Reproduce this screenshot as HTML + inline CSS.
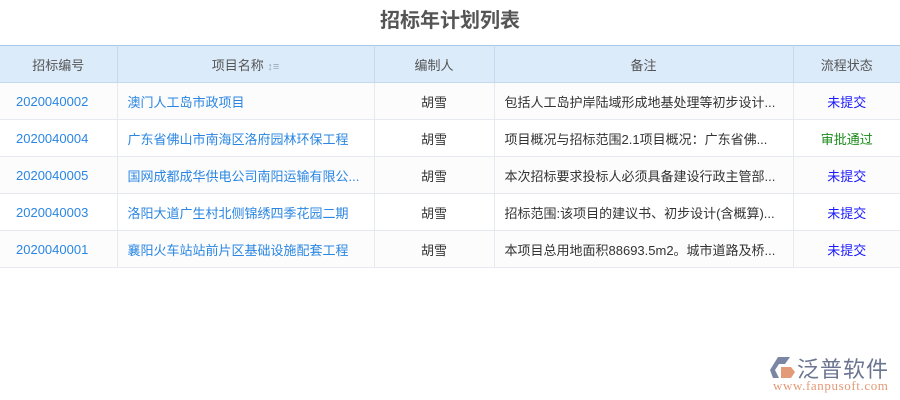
<!DOCTYPE html>
<html><head><meta charset="utf-8"><style>
body{margin:0;width:900px;height:400px;background:#fff;font-family:"Liberation Sans","Noto Sans CJK SC",sans-serif;overflow:hidden;position:relative}
h1{margin:0;position:absolute;top:7px;left:0;width:900px;text-align:center;font-size:20px;font-weight:bold;color:#555;line-height:28px}
table{position:absolute;top:45px;left:0;width:900px;border-collapse:collapse;font-size:13px;table-layout:fixed}
th{background:#dcebfa;color:#555;font-weight:normal;height:36px;padding:0;border:1px solid #c5d9ee;border-top:1px solid #a9c9ea}
td{height:36px;padding:0 10px;border:1px solid #e6e9ee;color:#333;white-space:nowrap;overflow:hidden;text-overflow:ellipsis}
tr:nth-child(even) td{background:#fcfcfd}
td.a{color:#2a86e2;padding-left:16px}td.b{color:#2a86e2}td.c{text-align:center}td.s{text-align:center;color:#1a1aff}td.g{text-align:center;color:#1a8a1a}
th:first-child,td:first-child{border-left:none}th:last-child,td:last-child{border-right:none}
.logo{position:absolute;left:770px;top:354px}
</style></head><body>
<h1>招标年计划列表</h1>
<table>
<colgroup><col style="width:117px"><col style="width:257px"><col style="width:120px"><col style="width:299px"><col style="width:107px"></colgroup>
<tr><th>招标编号</th><th>项目名称 <span style="color:#9ab;font-size:11px">↕≡</span></th><th>编制人</th><th>备注</th><th>流程状态</th></tr>
<tr><td class="a">2020040002</td><td class="b">澳门人工岛市政项目</td><td class="c">胡雪</td><td>包括人工岛护岸陆域形成地基处理等初步设计...</td><td class="s">未提交</td></tr>
<tr><td class="a">2020040004</td><td class="b">广东省佛山市南海区洛府园林环保工程</td><td class="c">胡雪</td><td>项目概况与招标范围2.1项目概况：广东省佛...</td><td class="g">审批通过</td></tr>
<tr><td class="a">2020040005</td><td class="b">国网成都成华供电公司南阳运输有限公...</td><td class="c">胡雪</td><td>本次招标要求投标人必须具备建设行政主管部...</td><td class="s">未提交</td></tr>
<tr><td class="a">2020040003</td><td class="b">洛阳大道广生村北侧锦绣四季花园二期</td><td class="c">胡雪</td><td>招标范围:该项目的建议书、初步设计(含概算)...</td><td class="s">未提交</td></tr>
<tr><td class="a">2020040001</td><td class="b">襄阳火车站站前片区基础设施配套工程</td><td class="c">胡雪</td><td>本项目总用地面积88693.5m2。城市道路及桥...</td><td class="s">未提交</td></tr>
</table>
<div class="logo">
<svg width="26" height="24" style="position:absolute;left:0;top:2px"><path d="M8 1h12l-5 7h-6l-4 6 4 8H3L0 14z" fill="#7a86a3"/><path d="M11 11h10l4 5-4 6h-10z" fill="#e39a78"/></svg>
<span style="position:absolute;left:27px;top:-2px;font-size:22px;color:#6b7590;letter-spacing:1px;white-space:nowrap">泛普软件</span>
<span style="position:absolute;left:3px;top:24px;font-size:13px;color:#e39a78;font-family:'Liberation Serif',serif;letter-spacing:0.6px;white-space:nowrap">www.fanpusoft.com</span>
</div>
</body></html>
